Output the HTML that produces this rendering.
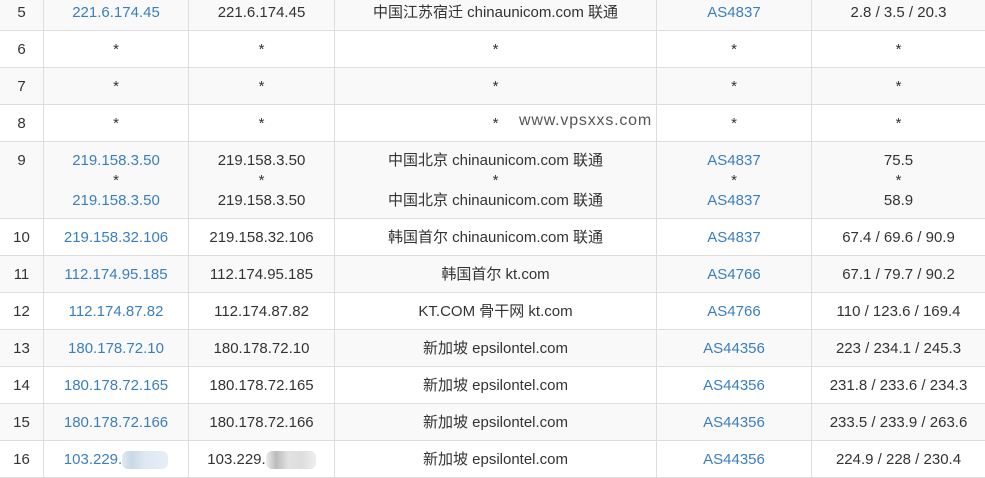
<!DOCTYPE html>
<html><head><meta charset="utf-8"><style>
*{margin:0;padding:0;box-sizing:border-box}
body{width:985px;height:476px;overflow:hidden;background:#fff;font-family:"Liberation Sans","Noto Sans CJK SC",sans-serif;font-size:15px;color:#333;position:relative}
.r{position:absolute;left:0;width:985px;border-bottom:1px solid #ddd}
.g{background:#f9f9f9}
.c{position:absolute;top:0;bottom:0;display:flex;flex-direction:column;justify-content:center;align-items:center;text-align:center;border-left:1px solid #ddd;line-height:20px;white-space:nowrap;padding-top:2px}
.c1{left:0;width:43px;border-left:none}
.c2{left:43px;width:145px}
.c3{left:188px;width:146px}
.c4{left:334px;width:322px}
.c5{left:656px;width:155px}
.c6{left:811px;width:174px}
.t .c{justify-content:flex-start;padding-top:9px}
a{color:#3a7fc0;text-decoration:none}
.wm{position:absolute;left:519px;top:112px;font-size:16px;letter-spacing:0.8px;color:#555}
.bl{display:inline-block;width:46px;height:18px;vertical-align:middle;border-radius:6px}
</style></head><body>
<div class="r g" style="top:-7px;height:38px"><div class="c c1">5</div><div class="c c2"><a>221.6.174.45</a></div><div class="c c3">221.6.174.45</div><div class="c c4">中国江苏宿迁 chinaunicom.com 联通</div><div class="c c5"><a>AS4837</a></div><div class="c c6">2.8 / 3.5 / 20.3</div></div>
<div class="r" style="top:31px;height:37px"><div class="c c1">6</div><div class="c c2">*</div><div class="c c3">*</div><div class="c c4">*</div><div class="c c5">*</div><div class="c c6">*</div></div>
<div class="r g" style="top:68px;height:37px"><div class="c c1">7</div><div class="c c2">*</div><div class="c c3">*</div><div class="c c4">*</div><div class="c c5">*</div><div class="c c6">*</div></div>
<div class="r" style="top:105px;height:37px"><div class="c c1">8</div><div class="c c2">*</div><div class="c c3">*</div><div class="c c4">*</div><div class="c c5">*</div><div class="c c6">*</div></div>
<div class="r g t" style="top:142px;height:77px"><div class="c c1">9</div><div class="c c2"><a>219.158.3.50</a><div>*</div><a>219.158.3.50</a></div><div class="c c3">219.158.3.50<div>*</div>219.158.3.50</div><div class="c c4">中国北京 chinaunicom.com 联通<div>*</div>中国北京 chinaunicom.com 联通</div><div class="c c5"><a>AS4837</a><div>*</div><a>AS4837</a></div><div class="c c6">75.5<div>*</div>58.9</div></div>
<div class="r" style="top:219px;height:37px"><div class="c c1">10</div><div class="c c2"><a>219.158.32.106</a></div><div class="c c3">219.158.32.106</div><div class="c c4">韩国首尔 chinaunicom.com 联通</div><div class="c c5"><a>AS4837</a></div><div class="c c6">67.4 / 69.6 / 90.9</div></div>
<div class="r g" style="top:256px;height:37px"><div class="c c1">11</div><div class="c c2"><a>112.174.95.185</a></div><div class="c c3">112.174.95.185</div><div class="c c4">韩国首尔 kt.com</div><div class="c c5"><a>AS4766</a></div><div class="c c6">67.1 / 79.7 / 90.2</div></div>
<div class="r" style="top:293px;height:37px"><div class="c c1">12</div><div class="c c2"><a>112.174.87.82</a></div><div class="c c3">112.174.87.82</div><div class="c c4">KT.COM 骨干网 kt.com</div><div class="c c5"><a>AS4766</a></div><div class="c c6">110 / 123.6 / 169.4</div></div>
<div class="r g" style="top:330px;height:37px"><div class="c c1">13</div><div class="c c2"><a>180.178.72.10</a></div><div class="c c3">180.178.72.10</div><div class="c c4">新加坡 epsilontel.com</div><div class="c c5"><a>AS44356</a></div><div class="c c6">223 / 234.1 / 245.3</div></div>
<div class="r" style="top:367px;height:37px"><div class="c c1">14</div><div class="c c2"><a>180.178.72.165</a></div><div class="c c3">180.178.72.165</div><div class="c c4">新加坡 epsilontel.com</div><div class="c c5"><a>AS44356</a></div><div class="c c6">231.8 / 233.6 / 234.3</div></div>
<div class="r g" style="top:404px;height:37px"><div class="c c1">15</div><div class="c c2"><a>180.178.72.166</a></div><div class="c c3">180.178.72.166</div><div class="c c4">新加坡 epsilontel.com</div><div class="c c5"><a>AS44356</a></div><div class="c c6">233.5 / 233.9 / 263.6</div></div>
<div class="r" style="top:441px;height:37px"><div class="c c1">16</div><div class="c c2"><div><a>103.229.</a><span class="bl" style="background:linear-gradient(90deg,#e2eaf3,#c9d8e8 20%,#dfe8f2 50%,#e6eef6)"></span></div></div><div class="c c3"><div>103.229.<span class="bl" style="width:50px;background:linear-gradient(90deg,#eee,#bbb 20%,#e2e2e2 45%,#ddd 70%,#eee)"></span></div></div><div class="c c4">新加坡 epsilontel.com</div><div class="c c5"><a>AS44356</a></div><div class="c c6">224.9 / 228 / 230.4</div></div>
<div class="wm">www.vpsxxs.com</div>
</body></html>
